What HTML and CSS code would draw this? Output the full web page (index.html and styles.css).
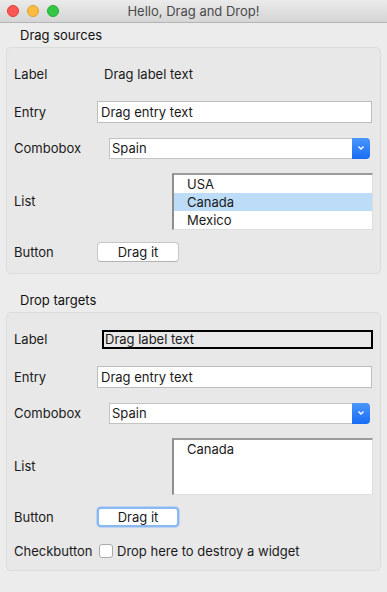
FILE: index.html
```html
<!DOCTYPE html>
<html lang="en">
<head>
    <meta charset="UTF-8">
    <meta name="viewport" content="width=device-width, initial-scale=1.0">
    <title>Hello, Drag and Drop!</title>
    <link rel="stylesheet" href="styles.css">
</head>
<body>
    <div class="window">
        <div class="titlebar">
            <div class="lights">
                <span class="light light-red"></span>
                <span class="light light-yellow"></span>
                <span class="light light-green"></span>
            </div>
            <div class="title">Hello, Drag and Drop!</div>
        </div>

        <h2 class="group-title">Drag sources</h2>
        <div class="group">
            <div class="cell-label">Label</div>
            <div class="cell plain-label">Drag label text</div>

            <div class="cell-label">Entry</div>
            <div class="cell"><div class="entry">Drag entry text</div></div>

            <div class="cell-label">Combobox</div>
            <div class="cell">
                <div class="combo">
                    <span class="combo-text">Spain</span>
                    <span class="combo-btn">
                        <svg width="8" height="6" viewBox="0 0 8 6"><path d="M1.5 1.5 L4 4 L6.5 1.5" fill="none" stroke="#fff" stroke-width="1.4"/></svg>
                    </span>
                </div>
            </div>

            <div class="cell-label">List</div>
            <div class="cell">
                <ul class="listbox">
                    <li>USA</li>
                    <li class="selected">Canada</li>
                    <li>Mexico</li>
                </ul>
            </div>

            <div class="cell-label">Button</div>
            <div class="cell"><div class="button">Drag it</div></div>
        </div>

        <h2 class="group-title second">Drop targets</h2>
        <div class="group targets">
            <div class="cell-label">Label</div>
            <div class="cell"><div class="boxed-label">Drag label text</div></div>

            <div class="cell-label">Entry</div>
            <div class="cell"><div class="entry">Drag entry text</div></div>

            <div class="cell-label">Combobox</div>
            <div class="cell">
                <div class="combo">
                    <span class="combo-text">Spain</span>
                    <span class="combo-btn">
                        <svg width="8" height="6" viewBox="0 0 8 6"><path d="M1.5 1.5 L4 4 L6.5 1.5" fill="none" stroke="#fff" stroke-width="1.4"/></svg>
                    </span>
                </div>
            </div>

            <div class="cell-label">List</div>
            <div class="cell">
                <ul class="listbox">
                    <li>Canada</li>
                </ul>
            </div>

            <div class="cell-label">Button</div>
            <div class="cell"><div class="button focused">Drag it</div></div>

            <div class="cell-label">Checkbutton</div>
            <div class="cell check-row">
                <span class="checkbox"></span>
                <span>Drop here to destroy a widget</span>
            </div>
        </div>
    </div>
</body>
</html>
```

FILE: styles.css
```css
* {
    box-sizing: border-box;
}
body {
    margin: 0;
    background-color: #ececec;
    font-family: Inter, "Liberation Sans", Arial, sans-serif;
    font-size: 13px;
    color: #1a1a1a;
}
.window {
    height: 592px;
    background-color: #ececec;
}
.titlebar {
    height: 23px;
    position: relative;
    background: linear-gradient(#ebebeb, #d5d5d5);
    border-bottom: 1px solid #b4b4b4;
    display: flex;
    align-items: center;
    justify-content: center;
}
.lights {
    position: absolute;
    left: 7px;
    top: 5px;
    display: flex;
    gap: 8px;
}
.light {
    width: 12px;
    height: 12px;
    border-radius: 50%;
}
.light-red {
    background-color: #fc5753;
    border: 1px solid #df3d38;
}
.light-yellow {
    background-color: #fdbc40;
    border: 1px solid #dea033;
}
.light-green {
    background-color: #33c748;
    border: 1px solid #26aa34;
}
.title {
    color: #4a4a4a;
    font-size: 13px;
}
.group-title {
    margin: 0;
    padding-left: 20px;
    height: 24px;
    line-height: 24px;
    font-size: 13px;
    font-weight: normal;
    color: #111;
}
.group-title.second {
    margin-top: 14px;
}
.group {
    margin-left: 6px;
    width: 375px;
    border: 1px solid #dcdcdc;
    border-radius: 5px;
    background-color: #e8e8e8;
    padding: 7px 6px 6px 7px;
    display: grid;
    grid-template-columns: 82px 1fr;
    grid-template-rows: 38px 38px 34px 72px 30px;
    align-items: center;
}
.group.targets {
    grid-template-rows: 38px 38px 34px 72px 30px 38px;
    padding-bottom: 0;
}
.cell-label {
    color: #1a1a1a;
}
.cell {
    display: flex;
    align-items: center;
}
.plain-label {
    padding-left: 8px;
}
.entry {
    margin-left: 1px;
    margin-right: 2px;
    flex: 1;
    height: 22px;
    line-height: 20px;
    background-color: #fff;
    border: 1px solid #bdbdbd;
    padding-left: 3px;
}
.combo {
    margin-left: 13px;
    margin-right: 4px;
    flex: 1;
    height: 21px;
    display: flex;
    background-color: #fff;
    border: 1px solid #c3c3c3;
    border-right: none;
    border-radius: 0 4px 4px 0;
}
.combo-text {
    flex: 1;
    line-height: 19px;
    padding-left: 2px;
}
.combo-btn {
    width: 18px;
    margin: -1px 0;
    border-radius: 0 4px 4px 0;
    background: linear-gradient(#4b97fc, #176cf4);
    display: flex;
    align-items: center;
    justify-content: center;
}
.listbox {
    list-style: none;
    margin: 0 1px 0 76px;
    padding: 0;
    flex: 1;
    height: 57px;
    background-color: #fff;
    border-style: solid;
    border-width: 2px 1px 1px 2px;
    border-color: #9c9c9c #dedede #dedede #8e8e8e;
}
.listbox li {
    height: 18px;
    line-height: 18px;
    padding-left: 13px;
}
.listbox li.selected {
    background-color: #bcdcf8;
}
.button {
    margin-left: 1px;
    width: 82px;
    height: 20px;
    line-height: 18px;
    text-align: center;
    background-color: #fff;
    border: 1px solid #c6c6c6;
    border-bottom-color: #b3b3b3;
    border-radius: 4px;
}
.button.focused {
    border: 2px solid #8cb8ef;
    line-height: 16px;
    box-shadow: 0 0 0 1px #b9d4f5;
}
.boxed-label {
    margin-left: 6px;
    margin-right: 1px;
    flex: 1;
    height: 19px;
    line-height: 15px;
    border: 2px solid #000;
    padding-left: 1px;
}
.check-row {
    padding-left: 3px;
    gap: 4px;
}
.checkbox {
    width: 14px;
    height: 14px;
    background-color: #fff;
    border: 1px solid #ababab;
    border-radius: 3px;
}
```
